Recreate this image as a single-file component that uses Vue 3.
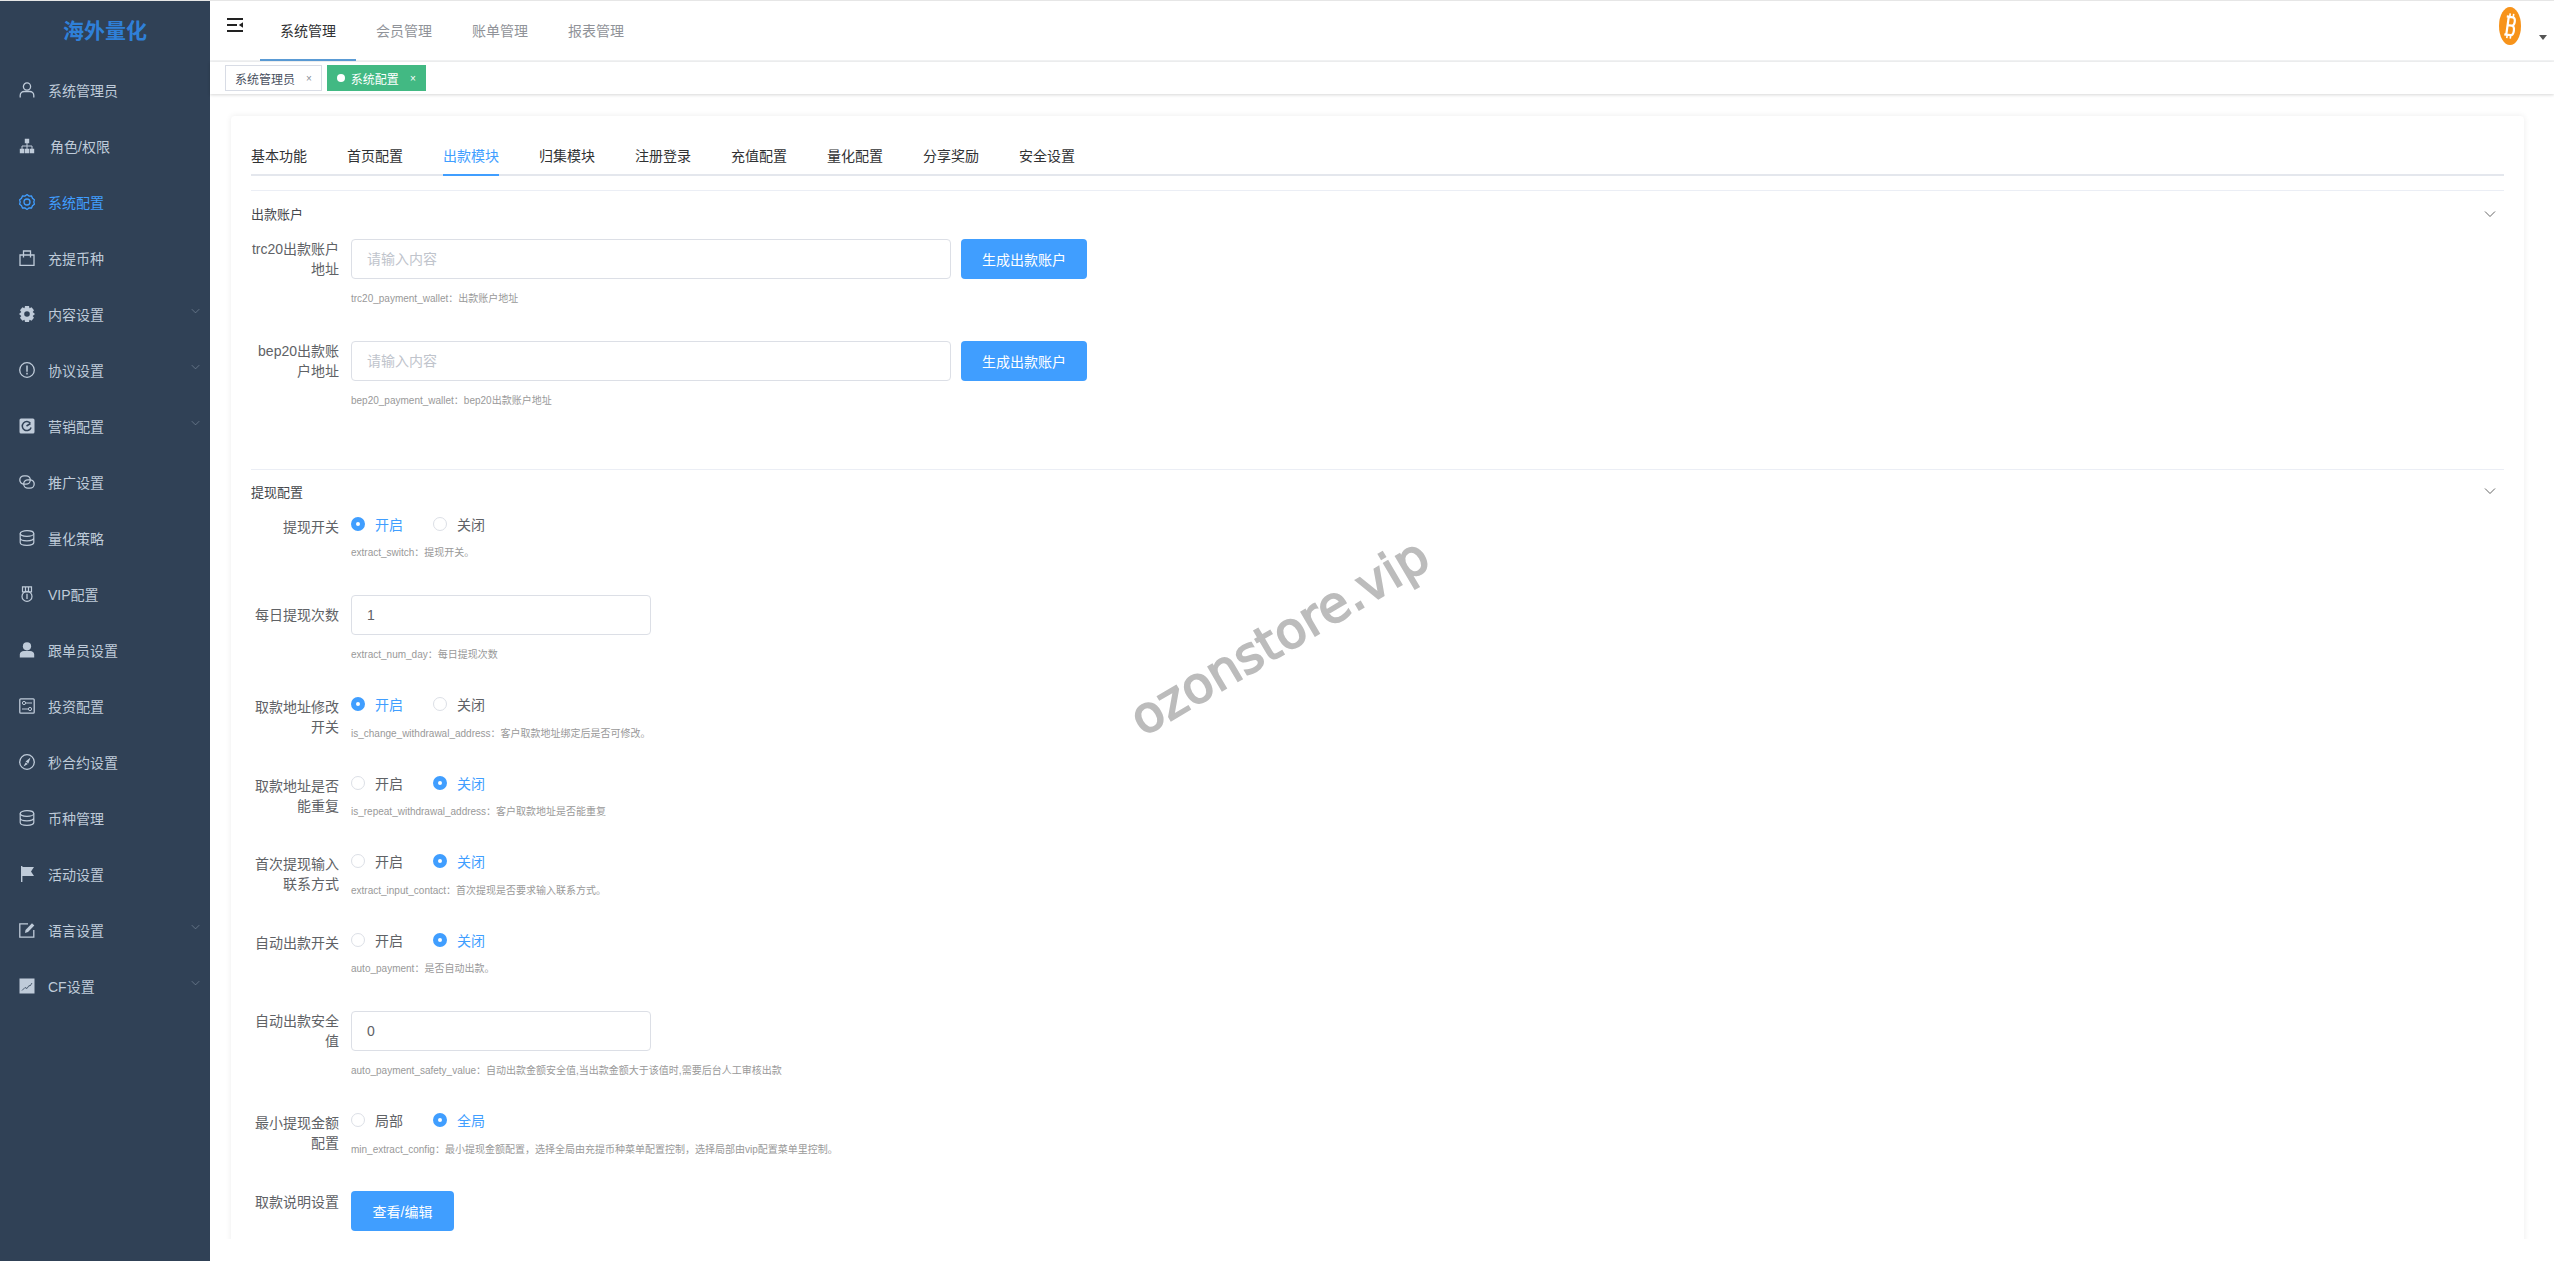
<template>
  <div class="layout">
    <aside class="sidebar">
      <div class="logo">海外量化</div>
      <ul class="menu">
        <li v-for="m in menus" :key="m.name" class="menu-item" :class="{ active: m.active }">
          <svg class="menu-icon" viewBox="0 0 16 16" v-html="icons[m.icon]"></svg>
          <span :class="{ shifted: m.name === '角色/权限' }">{{ m.name }}</span>
          <svg v-if="m.sub" class="menu-arrow" viewBox="0 0 12 8"><path d="M1 1.5l5 5 5-5" fill="none" stroke="currentColor" stroke-width="0.8" /></svg>
        </li>
      </ul>
    </aside>

    <div class="main">
      <header class="navbar">
        <svg class="hamburger" viewBox="0 0 16 14">
          <path d="M0 1h16M0 7h10M0 13h16" stroke="#222" stroke-width="1.8" fill="none" />
          <path d="M16 4.2v5.6L11.8 7z" fill="#222" />
        </svg>
        <nav class="top-nav">
          <a v-for="(t, i) in topTabs" :key="t" class="top-tab" :class="{ current: i === 0 }">{{ t }}</a>
        </nav>
        <div class="user">
          <svg class="btc" viewBox="0 0 22 38">
            <ellipse cx="11" cy="19" rx="11" ry="19" fill="#f7931a" />
            <g transform="rotate(8 11 19)" fill="none" stroke="#fff" stroke-width="2.2">
              <path d="M6.5 10h6c3.5 0 3.5 8.5 0 8.5h-5m5 0c4 0 4 9.5 0 9.5h-6M8.5 10v18" />
              <path d="M9.5 6.5V10M13 6.5V10M9.5 28v3.5M13 28v3.5" stroke-width="1.6" />
            </g>
          </svg>
          <i class="caret"></i>
        </div>
      </header>

      <div class="tags">
        <span class="tag">系统管理员<em>×</em></span>
        <span class="tag on"><i class="dot"></i>系统配置<em>×</em></span>
      </div>

      <section class="content">
        <div class="card">
          <div class="tabs">
            <span v-for="t in tabs" :key="t" class="tab" :class="{ current: t === '出款模块' }">{{ t }}</span>
          </div>

          <div class="panel first">
            <div class="panel-head">
              <span>出款账户</span>
              <svg class="chevron" viewBox="0 0 12 8"><path d="M1 1.5l5 5 5-5" fill="none" stroke="#555" stroke-width="0.9" /></svg>
            </div>
            <div v-for="w in wallets" :key="w.label" class="row">
              <label class="label">{{ w.label }}</label>
              <div class="field">
                <div class="inline">
                  <div class="input wide placeholder">请输入内容</div>
                  <button type="button" class="btn gen">生成出款账户</button>
                </div>
                <p class="hint">{{ w.hint }}</p>
              </div>
            </div>
          </div>

          <div class="panel">
            <div class="panel-head second">
              <span>提现配置</span>
              <svg class="chevron" viewBox="0 0 12 8"><path d="M1 1.5l5 5 5-5" fill="none" stroke="#555" stroke-width="0.9" /></svg>
            </div>
            <div v-for="f in fields" :key="f.label" class="row">
              <label class="label" :class="{ mid: f.mid }">{{ f.label }}</label>
              <div class="field">
                <div v-if="f.options" class="radios">
                  <span v-for="(o, i) in f.options" :key="o" class="radio" :class="{ checked: f.value === i }">
                    <i class="circle"></i>{{ o }}
                  </span>
                </div>
                <div v-else-if="f.input !== undefined" class="input">{{ f.input }}</div>
                <button v-else type="button" class="btn view">查看/编辑</button>
                <p v-if="f.hint" class="hint">{{ f.hint }}</p>
              </div>
            </div>
          </div>
        </div>
      </section>
    </div>
    <div class="watermark">ozonstore.vip</div>
  </div>
</template>

<script setup>
const topTabs = ['系统管理', '会员管理', '账单管理', '报表管理']
const tabs = ['基本功能', '首页配置', '出款模块', '归集模块', '注册登录', '充值配置', '量化配置', '分享奖励', '安全设置']

const db = '<ellipse cx="8" cy="3.5" rx="6.8" ry="2.8" fill="none" stroke="currentColor" stroke-width="1.2"/><path d="M1.2 3.5v9c0 1.5 3 2.8 6.8 2.8s6.8-1.3 6.8-2.8v-9M1.2 8c0 1.5 3 2.8 6.8 2.8s6.8-1.3 6.8-2.8" fill="none" stroke="currentColor" stroke-width="1.2"/>'
const icons = {
  user: '<circle cx="8" cy="4.5" r="3.6" fill="none" stroke="currentColor" stroke-width="1.3"/><path d="M1.2 15.5v-2c0-2.500 2-4 4-4h5.600c2 0 4 1.500 4 4v2" fill="none" stroke="currentColor" stroke-width="1.3"/>',
  tree: '<path d="M5.800 .8h4.400v4.400H5.800zM.8 10.800h4.400v4.400H.8zM5.800 10.800h4.400v4.400H5.800zM10.800 10.800h4.400v4.400h-4.400z" fill="currentColor"/><path d="M8 5v6M3 11V8h10v3" fill="none" stroke="currentColor"/>',
  gear: '<path d="M8 .6l2 1.500 2.500-.1 1 2.300 1.900 1.500-.6 2.200.6 2.200-1.900 1.500-1 2.300-2.500-.1-2 1.500-2-1.500-2.500.1-1-2.300L.6 10.200l.6-2.200-.6-2.200 1.900-1.500 1-2.300 2.500.1z" fill="none" stroke="currentColor" stroke-width="1.3"/><circle cx="8" cy="8" r="3" fill="none" stroke="currentColor" stroke-width="1.3"/>',
  bag: '<path d="M1 5h14v10.500H1zM4.500 7.500V1h7v6.500" fill="none" stroke="currentColor" stroke-width="1.3"/>',
  cog: '<path fill-rule="evenodd" d="M6 0h4l.5 2.200 2.100-.9 2.400 3-1.300 1.800L16 8l-2.300 1.900 1.300 1.800-2.400 3-2.100-.9L10 16H6l-.5-2.200-2.100.9-2.400-3 1.300-1.800L0 8l2.300-1.900L1 4.300l2.400-3 2.100.9zM8 5.200a2.800 2.800 0 100 5.600 2.800 2.800 0 000-5.600z" fill="currentColor"/>',
  info: '<circle cx="8" cy="8" r="7.3" fill="none" stroke="currentColor" stroke-width="1.3"/><path d="M8 3.500v6.200M8 10.800v1.800" stroke="currentColor" stroke-width="1.5"/>',
  market: '<rect x=".5" y=".5" width="15" height="15" rx="1.5" fill="currentColor"/><path d="M11.500 5.500a4.500 4.500 0 10.6 4M7.500 8l4-2.500" fill="none" stroke="#304156" stroke-width="1.5"/>',
  link: '<rect x=".8" y="1.8" width="10.5" height="8.4" rx="4.2" fill="none" stroke="currentColor" stroke-width="1.3"/><rect x="4.7" y="5.8" width="10.5" height="8.4" rx="4.2" fill="none" stroke="currentColor" stroke-width="1.3"/>',
  db,
  medal: '<path d="M3.500 .8h9v5h-9zM6.500 .8v5M9.500 .8v5" fill="none" stroke="currentColor" stroke-width="1.2"/><circle cx="8" cy="10.4" r="5" fill="none" stroke="currentColor" stroke-width="1.2"/><path d="M8 7.800v5.200" stroke="currentColor" stroke-width="1.3"/>',
  person: '<circle cx="8" cy="4.3" r="4.1" fill="currentColor"/><path d="M.8 15.500v-3c0-2 2-3.500 4-3.500h6.400c2 0 4 1.500 4 3.500v3z" fill="currentColor"/>',
  card: '<rect x=".8" y=".8" width="14.4" height="14.4" rx="1" fill="none" stroke="currentColor" stroke-width="1.3"/><circle cx="5" cy="5" r="1.6" fill="none" stroke="currentColor"/><circle cx="11" cy="11" r="1.6" fill="none" stroke="currentColor"/><path d="M6.600 5H13M3 11h6.400" stroke="currentColor"/>',
  compass: '<circle cx="8" cy="8" r="7.3" fill="none" stroke="currentColor" stroke-width="1.3"/><path d="M11.500 3.500L9.400 9.400 6.600 7.600zM6.600 8.400l2.300 1.600L4.500 12.500z" fill="currentColor"/>',
  flag: '<path d="M2 0h1.400v16H2zM3.400 1H15l-3 4.500 3 4.500H3.400z" fill="currentColor"/>',
  edit: '<path d="M9 1.800H.8v13.400h14V8" fill="none" stroke="currentColor" stroke-width="1.3"/><path d="M6 11l.5-3L13 1.200l2.300 2.300L9 10z" fill="currentColor"/>',
  chart: '<rect x=".5" y=".5" width="15" height="15" fill="currentColor"/><path d="M3 12.500l3-3 2 1 2-3 1 .5 2-3" fill="none" stroke="#304156" stroke-width="0.8"/>'
}

const menus = [
  { name: '系统管理员', icon: 'user' },
  { name: '角色/权限', icon: 'tree' },
  { name: '系统配置', icon: 'gear', active: true },
  { name: '充提币种', icon: 'bag' },
  { name: '内容设置', icon: 'cog', sub: true },
  { name: '协议设置', icon: 'info', sub: true },
  { name: '营销配置', icon: 'market', sub: true },
  { name: '推广设置', icon: 'link' },
  { name: '量化策略', icon: 'db' },
  { name: 'VIP配置', icon: 'medal' },
  { name: '跟单员设置', icon: 'person' },
  { name: '投资配置', icon: 'card' },
  { name: '秒合约设置', icon: 'compass' },
  { name: '币种管理', icon: 'db' },
  { name: '活动设置', icon: 'flag' },
  { name: '语言设置', icon: 'edit', sub: true },
  { name: 'CF设置', icon: 'chart', sub: true }
]

const wallets = [
  { label: 'trc20出款账户地址', hint: 'trc20_payment_wallet：出款账户地址' },
  { label: 'bep20出款账户地址', hint: 'bep20_payment_wallet：bep20出款账户地址' }
]

const onOff = ['开启', '关闭']
const fields = [
  { label: '提现开关', options: onOff, value: 0, hint: 'extract_switch：提现开关。' },
  { label: '每日提现次数', input: '1', mid: true, hint: 'extract_num_day：每日提现次数' },
  { label: '取款地址修改开关', options: onOff, value: 0, hint: 'is_change_withdrawal_address：客户取款地址绑定后是否可修改。' },
  { label: '取款地址是否能重复', options: onOff, value: 1, hint: 'is_repeat_withdrawal_address：客户取款地址是否能重复' },
  { label: '首次提现输入联系方式', options: onOff, value: 1, hint: 'extract_input_contact：首次提现是否要求输入联系方式。' },
  { label: '自动出款开关', options: onOff, value: 1, hint: 'auto_payment：是否自动出款。' },
  { label: '自动出款安全值', input: '0', hint: 'auto_payment_safety_value：自动出款金额安全值,当出款金额大于该值时,需要后台人工审核出款' },
  { label: '最小提现金额配置', options: ['局部', '全局'], value: 1, hint: 'min_extract_config：最小提现金额配置，选择全局由充提币种菜单配置控制，选择局部由vip配置菜单里控制。' },
  { label: '取款说明设置' }
]
</script>

<style>
html, body {
  margin: 0;
  height: 100%;
  overflow: hidden;
  background: #fff;
}
</style>

<style scoped>
.layout {
  display: flex;
  height: 1261px;
  position: relative;
  overflow: hidden;
  font-family: "Liberation Sans", "Noto Sans CJK SC", sans-serif;
  font-size: 14px;
  color: #606266;
  border-top: 1px solid #e6e6e6;
  box-sizing: border-box;
}

.sidebar {
  width: 210px;
  flex: none;
  background: #304156;
  color: #bfcbd9;
}
.logo {
  height: 61px;
  line-height: 60px;
  text-align: center;
  font-size: 21px;
  font-weight: 700;
  color: #2f80d8;
}
.menu {
  list-style: none;
  margin: 0;
  padding: 0;
}
.menu-item {
  height: 56px;
  display: flex;
  align-items: center;
  padding-left: 19px;
  position: relative;
}
.menu-item.active {
  color: #409eff;
}
.menu-icon {
  width: 16px;
  height: 16px;
  margin-right: 13px;
  flex: none;
}
.shifted {
  margin-left: 2px;
}
.menu-arrow {
  position: absolute;
  right: 10px;
  top: 22px;
  width: 9px;
  height: 6px;
  color: #8593a5;
}

.main {
  flex: 1;
  min-width: 0;
  display: flex;
  flex-direction: column;
}

.navbar {
  height: 59px;
  flex: none;
  display: flex;
  align-items: flex-start;
  padding-left: 17px;
  background: #fff;
  border-bottom: 2px solid #f2f3f4;
}
.hamburger {
  width: 16px;
  height: 14px;
  margin-top: 17px;
  margin-right: 17px;
  flex: none;
}
.top-nav {
  display: flex;
}
.top-tab {
  width: 96px;
  height: 58px;
  line-height: 60px;
  text-align: center;
  color: #909399;
  border-bottom: 2px solid transparent;
}
.top-tab.current {
  color: #303133;
  border-bottom-color: #5a9bd5;
}
.user {
  margin-left: auto;
  display: flex;
  align-items: flex-start;
  padding-right: 7px;
}
.btc {
  width: 22px;
  height: 38px;
  margin-top: 6px;
  margin-right: 18px;
}
.caret {
  width: 0;
  height: 0;
  margin-top: 34px;
  border-left: 4px solid transparent;
  border-right: 4px solid transparent;
  border-top: 5px solid #555;
}

.tags {
  height: 32px;
  flex: none;
  display: flex;
  align-items: center;
  gap: 5px;
  padding-left: 15px;
  background: #fff;
  box-shadow: 0 1px 3px rgba(0, 0, 0, 0.16);
  position: relative;
}
.tag {
  height: 26px;
  box-sizing: border-box;
  padding: 0 9px;
  display: flex;
  align-items: center;
  font-size: 12px;
  color: #495060;
  border: 1px solid #d8dce5;
}
.tag em {
  font-style: normal;
  font-size: 10px;
  margin-left: 11px;
  color: #8a8f99;
}
.tag.on {
  background: #42b983;
  border-color: #42b983;
  color: #fff;
}
.tag.on em {
  color: #fff;
}
.dot {
  width: 8px;
  height: 8px;
  border-radius: 50%;
  background: #fff;
  margin-right: 6px;
}

/* the reference cuts the card off 22px above the window bottom */
.content {
  height: 1145px;
  flex: none;
  box-sizing: border-box;
  padding: 22px 30px 0 21px;
  overflow: hidden;
}
.card {
  height: 1200px;
  box-sizing: border-box;
  padding: 21px 20px 0;
  background: #fff;
  border-radius: 4px;
  box-shadow: 0 0 6px rgba(0, 0, 0, 0.08);
}

.tabs {
  height: 37px;
  display: flex;
  gap: 40px;
  border-bottom: 2px solid #e4e7ed;
}
.tab {
  line-height: 38px;
  height: 37px;
  color: #303133;
}
.tab.current {
  color: #409eff;
  border-bottom: 2px solid #409eff;
}

.panel {
  border-top: 1px solid #ebeef5;
  padding-bottom: 26px;
}
.panel.first {
  margin-top: 14px;
}
.panel-head {
  height: 48px;
  box-sizing: border-box;
  padding-bottom: 3px;
  display: flex;
  align-items: center;
  justify-content: space-between;
  font-size: 13px;
  color: #45474b;
}
.panel-head.second {
  height: 46.5px;
  padding-bottom: 4px;
}
.chevron {
  width: 12px;
  height: 8px;
  margin-right: 8px;
}

.row {
  display: flex;
  gap: 12px;
  margin-bottom: 35px;
}
.label {
  width: 88px;
  flex: none;
  text-align: right;
  line-height: 20px;
}
.label.mid {
  padding-top: 10px;
}
.field {
  min-width: 0;
}
.inline {
  display: flex;
  gap: 10px;
}
.input {
  width: 300px;
  height: 40px;
  box-sizing: border-box;
  padding: 0 15px;
  line-height: 38px;
  border: 1px solid #dcdfe6;
  border-radius: 4px;
}
.input.wide {
  width: 600px;
}
.placeholder {
  color: #c0c4cc;
}
.btn {
  height: 40px;
  border: none;
  border-radius: 4px;
  background: #409eff;
  color: #fff;
  font: inherit;
  padding: 0;
}
.btn.gen {
  width: 126px;
}
.btn.view {
  width: 103px;
  display: block;
  margin-top: -0.5px;
}
.radios {
  height: 16.5px;
  display: flex;
  gap: 30px;
  align-items: flex-start;
}
.radio {
  display: flex;
  align-items: center;
  height: 14px;
  color: #606266;
}
.radio.checked {
  color: #409eff;
}
.circle {
  width: 14px;
  height: 14px;
  box-sizing: border-box;
  border: 1px solid #dcdfe6;
  border-radius: 50%;
  margin-right: 10px;
  background: #fff;
}
.radio.checked .circle {
  border: 5px solid #409eff;
}
.hint {
  margin: 13px 0 0;
  font-size: 10px;
  line-height: 14px;
  color: #999;
  white-space: nowrap;
}

/* watermark stamped over the whole page */
.watermark {
  position: absolute;
  left: 1111px;
  top: 607px;
  font-family: "DejaVu Sans", sans-serif;
  font-size: 50px;
  -webkit-text-stroke: 1.8px #bcbcbc;
  color: #bcbcbc;
  transform: rotate(-30.5deg);
  white-space: nowrap;
  pointer-events: none;
}
</style>
